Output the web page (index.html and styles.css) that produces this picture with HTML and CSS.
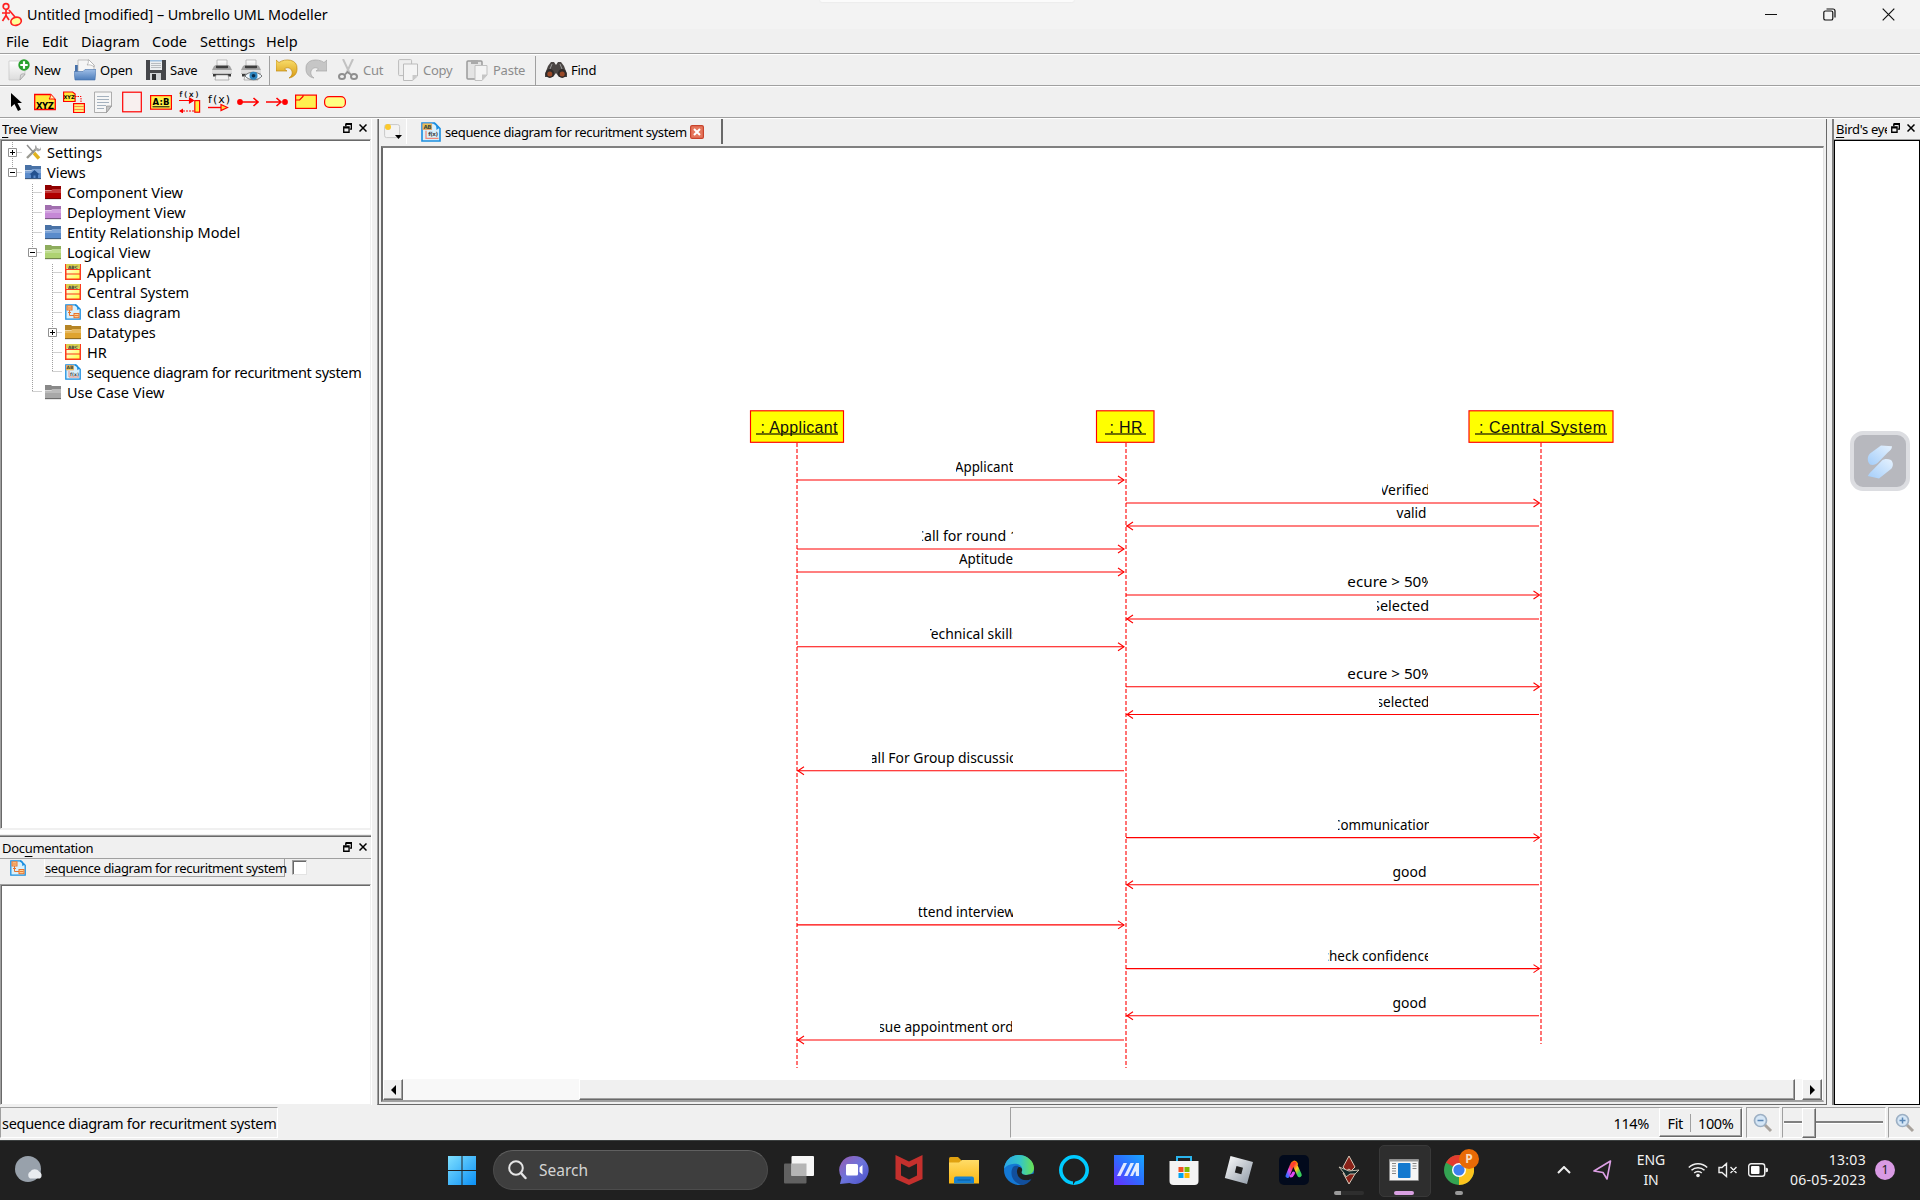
FILE: index.html
```html
<!DOCTYPE html>
<html lang="en">
<head>
<meta charset="utf-8">
<title>Untitled [modified] – Umbrello UML Modeller</title>
<link rel="stylesheet" href="styles.css">
</head>
<body>
<svg class="defs" width="0" height="0" aria-hidden="true">
  <defs>
    <linearGradient id="gWhite" x1="0" y1="0" x2="0" y2="1"><stop offset="0" stop-color="#fff"/><stop offset="1" stop-color="#dcdcdc"/></linearGradient>
    <linearGradient id="gBlue" x1="0" y1="0" x2="0" y2="1"><stop offset="0" stop-color="#9dbde6"/><stop offset="1" stop-color="#4d7dbb"/></linearGradient>
    <linearGradient id="gGold" x1="0" y1="0" x2="0" y2="1"><stop offset="0" stop-color="#f8dc6a"/><stop offset="1" stop-color="#d89a12"/></linearGradient>
    <linearGradient id="gWin" x1="0" y1="0" x2="1" y2="1"><stop offset="0" stop-color="#7fe0ff"/><stop offset="1" stop-color="#0a8ff5"/></linearGradient>
    <linearGradient id="gChat" x1="0" y1="0" x2="1" y2="1"><stop offset="0" stop-color="#9a5bb0"/><stop offset=".5" stop-color="#6c74dc"/><stop offset="1" stop-color="#4a4fc8"/></linearGradient>
    <linearGradient id="gFolder" x1="0" y1="0" x2="0" y2="1"><stop offset="0" stop-color="#ffdc68"/><stop offset="1" stop-color="#fbb711"/></linearGradient>
    <linearGradient id="gEdge" x1="0" y1="0" x2="1" y2="0"><stop offset="0" stop-color="#2aa5e8"/><stop offset=".55" stop-color="#35c6c6"/><stop offset="1" stop-color="#6be34f"/></linearGradient>
    <linearGradient id="gAsus" x1="0" y1="1" x2="1" y2="0"><stop offset="0" stop-color="#6a2cff"/><stop offset=".5" stop-color="#2d6cff"/><stop offset="1" stop-color="#17a8ff"/></linearGradient>
    <linearGradient id="gRob" x1="0" y1="0" x2="1" y2="1"><stop offset="0" stop-color="#fff"/><stop offset="1" stop-color="#8d98a5"/></linearGradient>
    <linearGradient id="gAdobe" x1="0" y1="1" x2="1" y2="0"><stop offset="0" stop-color="#3a6cff"/><stop offset=".3" stop-color="#e14cf0"/><stop offset=".6" stop-color="#ff3b30"/><stop offset="1" stop-color="#ff8a00"/></linearGradient>
    <linearGradient id="gAdobe2" x1="0" y1="0" x2=".6" y2="1"><stop offset="0" stop-color="#ff3b30"/><stop offset=".5" stop-color="#ffd21f"/><stop offset="1" stop-color="#37d05c"/></linearGradient>
    <linearGradient id="gS" x1="0" y1="1" x2="1" y2="0"><stop offset="0" stop-color="#a3cdfa"/><stop offset="1" stop-color="#e6f2fe"/></linearGradient>
    <linearGradient id="gCls" x1="0" y1="0" x2="1" y2="1"><stop offset="0" stop-color="#fff"/><stop offset="1" stop-color="#ffff3c"/></linearGradient>
    <symbol id="folder" viewBox="0 0 16 16">
      <path d="M0 2.500V1h6l1 1h9v4H0z" fill="currentColor"/><path d="M0 2.500V1h6l1 1h9v3H7L6 6H0z" fill="#000" opacity=".18"/>
      <path d="M0 6.500h6.500l1-1.500H16V15H0z" fill="currentColor"/><path d="M0 6.500h6.500l1-1.500H16v4H0z" fill="#fff" opacity=".22"/><path d="M0 14h16v1.300H0z" fill="#000" opacity=".35"/>
    </symbol>
    <symbol id="class" viewBox="0 0 16 16">
      <rect x=".75" y=".75" width="14.500" height="14.500" fill="url(#gCls)" stroke="#fb3b1e" stroke-width="1.500"/>
      <rect x="1" y="0" width="14" height="4.500" fill="#d9cf52"/><text x="8" y="4.600" text-anchor="middle" class="tiny abc">ABC</text>
      <path d="M1 5.500h14M1 10h14" stroke="#fb3b1e" stroke-width="1.200"/>
    </symbol>
    <symbol id="clsdiag" viewBox="0 0 16 16">
      <path d="M.8.8h10l4.400 4.400v10H.8z" fill="#d9f0fb" stroke="#1d8fe0" stroke-width="1.300"/>
      <rect x="2" y="1.800" width="5" height="4.200" fill="#ffd79a" stroke="#e8732c"/><rect x="9" y="9.500" width="5" height="4.200" fill="#ffd79a" stroke="#e8732c"/>
      <path d="M2.500 4h4M9.500 11.600h4M4.500 6v5.500H9M3 8l1.500 1.500L6 8" fill="none" stroke="#e8732c"/><path d="M10 1c2.500.5 3 2 3 4l1.500-1" fill="none" stroke="#1d8fe0" stroke-width="1.400"/>
    </symbol>
    <symbol id="seqdiag" viewBox="0 0 16 16">
      <path d="M.8.8h10l4.400 4.400v10H.8z" fill="#d9f0fb" stroke="#1d8fe0" stroke-width="1.300"/>
      <rect x="1.500" y="1.500" width="7" height="4.500" fill="#e8d24a" stroke="#e8a06a" stroke-width=".7"/><text x="5" y="5.300" text-anchor="middle" class="tiny">AB</text>
      <text x="9.500" y="11.500" text-anchor="middle" class="tiny">f(x)</text><path d="M4 7v6h10" fill="none" stroke="#f08a7a"/><path d="M10 1c2.500.5 3 2 3 4l1.500-1" fill="none" stroke="#1d8fe0" stroke-width="1.400"/>
    </symbol>
    <symbol id="float" viewBox="0 0 8 9"><path d="M2.500.5h5v5H6M2.500.5V3M2.500 1.200h5" fill="none" stroke="#000" stroke-width="1.300"/><path d="M.6 3.600h4.800v4.700H.6zM.6 4.300h4.800" fill="none" stroke="#000" stroke-width="1.200"/></symbol>
    <symbol id="cross" viewBox="0 0 8 8"><path d="M.5.5l7 7M7.500.5l-7 7" stroke="#000" stroke-width="1.500"/></symbol>
    <symbol id="printer" viewBox="0 0 22 22">
      <path d="M6 1h10v8H6z" fill="url(#gWhite)" stroke="#999" stroke-width=".6"/><path d="M3 7l2-1v4h12V6l2 1 2 4v4H1v-4z" fill="#a2a2a2"/><path d="M5 6.500h12v3H5z" fill="#3e3e3e"/><path d="M1 11h20v3.500H1z" fill="#dedede"/><path d="M2 15h18v2.500H2z" fill="#3a3a3a"/><path d="M5 16h12l1 5H4z" fill="#f2f2f2" stroke="#8a8a8a" stroke-width=".6"/>
    </symbol>
    <symbol id="lens" viewBox="0 0 20 20"><path d="M11 11l7 7" stroke="#a8a29c" stroke-width="3"/><circle cx="7.500" cy="7.500" r="6" fill="#d5e6f6" stroke="#9db0c4" stroke-width="1.700"/></symbol>
  </defs>
</svg>

<header class="titlebar">
  <svg class="app-icon" width="22" height="26" viewBox="0 0 22 26"><g fill="none" stroke="#f22" stroke-width="1.700"><circle cx="5" cy="4.500" r="2.800"/><path d="M5 7.500v6M1 11h8M5 13.500L1.500 19M5 13.500L8 18M8 8l6 7"/><ellipse cx="15" cy="19.300" rx="5.300" ry="4" fill="#ff9" transform="rotate(-15 15 19)"/></g></svg>
  <span class="title">Untitled [modified] – Umbrello UML Modeller</span>
  <span class="notch"></span>
  <div class="winbtns">
    <svg width="12" height="12" viewBox="0 0 12 12"><path d="M0 5.500h12" stroke="#111"/></svg>
    <svg width="13" height="13" viewBox="0 0 13 13"><rect x=".8" y="3" width="9" height="9" rx="1.600" fill="none" stroke="#111" stroke-width="1.200"/><path d="M3.500 1h6.500a2 2 0 012 2v6.500" fill="none" stroke="#111" stroke-width="1.200"/></svg>
    <svg width="13" height="13" viewBox="0 0 13 13"><path d="M.7.7l11.600 11.600M12.300.7L.7 12.300" stroke="#111" stroke-width="1.200"/></svg>
  </div>
</header>
<nav class="menubar"><span class="m1">File</span><span class="m2">Edit</span><span class="m3">Diagram</span><span class="m4">Code</span><span class="m5">Settings</span><span class="m6">Help</span></nav>

<div class="toolbar main">
  <button class="t-new"><svg width="22" height="22" viewBox="0 0 22 22"><path d="M1 2h16v14l-5 5H1z" fill="url(#gWhite)" stroke="#c4c4c4" stroke-width=".7"/><path d="M17 15c-2-.5-4 0-4.500 1l-.5 5z" fill="#d8d8d8" stroke="#999" stroke-width=".6"/><circle cx="16" cy="6" r="5.700" fill="#26a02b"/><path d="M16 2.300v7.400M12.300 6h7.400" stroke="#fff" stroke-width="2.200"/></svg>New</button>
  <button class="t-open"><svg width="22" height="22" viewBox="0 0 22 22"><path d="M1 6h5v14H1z" fill="#4571ab"/><path d="M4 1h11l5 5v9H4z" fill="#f5f5f5" stroke="#a9a9a9" stroke-width=".7"/><path d="M14 1c1 2 0 4-1 5 3-.5 5 0 7 2V6l-5-5z" fill="#fff" stroke="#999" stroke-width=".6"/><path d="M0 12.500h9l2-2h11L21 21H1z" fill="url(#gBlue)" stroke="#4571ab" stroke-width=".6"/></svg>Open</button>
  <button class="t-save"><svg width="20" height="22" viewBox="0 0 20 22"><path d="M0 1h20v20H0z" fill="#45464a"/><path d="M4 1h12v10H4z" fill="#eceef0"/><path d="M4 1h12v1.500H4z" fill="#9fc0e0"/><path d="M5 4.500h10M5 6.500h10M5 8.500h10" stroke="#b8bcc0"/><path d="M4 14h11v7H4z" fill="#cfd2d5"/><path d="M6 15h4v6H6z" fill="#2c2d30"/></svg>Save</button>
  <button class="t-print"><svg width="22" height="22"><use href="#printer"/></svg></button>
  <button class="t-preview"><svg width="22" height="22" viewBox="0 0 22 22"><use href="#printer" width="22" height="22"/><path d="M5 17c3-5 13-5 17 0-4 5-13 5-17 0z" fill="#eef6fb" stroke="#555" stroke-width=".8"/><circle cx="13.500" cy="16.800" r="4" fill="#2f86bf"/><circle cx="13.500" cy="16.800" r="1.800" fill="#0b2d4c"/></svg></button>
  <i class="sep"></i>
  <button class="t-undo"><svg width="22" height="22" viewBox="0 0 22 22"><path d="M0 1l3 2.500C9-1 22 0 21 10c0 5-3 8-8 9 3-2 4-5 2.500-8-1.500-2.500-5-3-7-1l2.500 2H0z" fill="url(#gGold)" stroke="#c08a14" stroke-width=".7"/></svg></button>
  <button class="t-redo"><svg width="22" height="22" viewBox="0 0 22 22"><path d="M22 1l-3 2.500C13-1 0 0 1 10c0 5 3 8 8 9-3-2-4-5-2.500-8 1.500-2.500 5-3 7-1l-2.500 2h11z" fill="#c6c6c6" stroke="#a6a6a6" stroke-width=".7"/></svg></button>
  <button class="t-cut off"><svg width="20" height="22" viewBox="0 0 20 22"><path d="M5 0l7 15M15 0L8 15" stroke="#c2c2c2" stroke-width="2"/><ellipse cx="4" cy="17.500" rx="3" ry="2.600" fill="none" stroke="#8f8f8f" stroke-width="2"/><ellipse cx="16" cy="17.500" rx="3" ry="2.600" fill="none" stroke="#8f8f8f" stroke-width="2"/><path d="M6.500 16l3-3 4 3" fill="none" stroke="#8f8f8f" stroke-width="1.600"/></svg>Cut</button>
  <button class="t-copy off"><svg width="20" height="22" viewBox="0 0 20 22"><rect x=".6" y=".6" width="13" height="16" rx="1" fill="#eee" stroke="#bbb"/><path d="M5.500 5h14v12l-5 4.500h-9z" fill="#f4f4f4" stroke="#bbb"/><path d="M19.500 16l-5 5.500V16z" fill="#c9c9c9"/></svg>Copy</button>
  <button class="t-paste off"><svg width="22" height="22" viewBox="0 0 22 22"><rect x="1" y="2" width="15" height="18" rx="1" fill="#e4e4e4" stroke="#9a9a9a" stroke-width="1.500"/><path d="M5 1h7v4H5z" fill="#aaa"/><path d="M9 6.500h12V16l-5 5.500H9z" fill="#f4f4f4" stroke="#c0c0c0"/><path d="M21 15.500l-5 6v-6z" fill="#c5c5c5"/></svg>Paste</button>
  <i class="sep s2"></i>
  <button class="t-find"><svg width="22" height="18" viewBox="0 0 22 18"><path d="M3 5l3-4h3l2 3 2-3h3l3 4 3 8v3h-8l-3-4-3 4H0v-3z" fill="#4a4543"/><circle cx="4.800" cy="12.500" r="4.400" fill="#302b2a"/><circle cx="17.200" cy="12.500" r="4.400" fill="#302b2a"/><circle cx="4.800" cy="13" r="2.500" fill="#9a4a28"/><circle cx="17.200" cy="13" r="2.500" fill="#9a4a28"/><path d="M7 3l-2 5M15 3l2 5" stroke="#999"/></svg>Find</button>
</div>

<div class="toolbar tools">
  <svg viewBox="0 0 22 22"><path d="M6 2v14l3.500-3 3.500 7 3-1.500-3.500-6.500H17z" fill="#000"/></svg>
  <svg viewBox="0 0 22 22"><path d="M.7 3.500h16l4.600 5v10H.7z" fill="#ffe93b" stroke="red" stroke-width="1.300"/><path d="M16 3c1 2 0 4-1 5h6" fill="#fff8b0" stroke="red"/><text x="11" y="17.500" text-anchor="middle" class="ico b8" textLength="18">XYZ</text></svg>
  <svg viewBox="0 0 22 22"><path d="M.6 1h9l2.500 2v7.500H.6z" fill="#ffe93b" stroke="red" stroke-width="1.200"/><text x="6" y="8" text-anchor="middle" class="ico b5">XYZ</text><path d="M12 5.500h6V12" fill="none" stroke="red" stroke-dasharray="1.500 1"/><rect x="10.600" y="12.600" width="10.800" height="9" fill="#ffef7a" stroke="red" stroke-width="1.200"/><path d="M11 15.500h10M11 18.500h10" stroke="#f84"/></svg>
  <svg viewBox="0 0 22 22"><path d="M2.500 1h17v14l-5 6.500h-12z" fill="#f6f6f6" stroke="#9a9a9a" stroke-width=".8"/><path d="M5 5.500h12M5 8.500h12M5 11.500h12M5 14.500h9M5 17.500h7" stroke="#8fa0b0" stroke-width=".8"/><path d="M19.500 15l-5 6.500V15z" fill="#c3c3c3" stroke="#888" stroke-width=".6"/></svg>
  <svg viewBox="0 0 22 22"><rect x="1.700" y="1.200" width="18.600" height="19.600" fill="#f8f0ef" stroke="red" stroke-width="1.200"/></svg>
  <svg viewBox="0 0 22 22"><rect x=".6" y="4.600" width="20.800" height="13.600" fill="#fff04a" stroke="red" stroke-width="1.200"/><text x="11" y="14" text-anchor="middle" class="ico b8 u" textLength="17">A:B</text><path d="M2.500 15.800h17" stroke="#000"/></svg>
  <svg viewBox="0 0 22 22"><text x="10" y="6" text-anchor="middle" class="ico f8" textLength="19">f(x)</text><path d="M0 9.500h14M10.500 7l4 2.500-4 2.500z" fill="red" stroke="red" stroke-width="1.200"/><rect x="15.800" y="9.600" width="4.800" height="11.600" fill="#ffef3c" stroke="red" stroke-width="1.200"/><path d="M1 20h14" stroke="red" stroke-width="1.200" stroke-dasharray="2 1"/><path d="M4 17.500L0 20l4 2.500z" fill="red"/></svg>
  <svg viewBox="0 0 22 22"><text x="11" y="11.500" text-anchor="middle" class="ico f10" textLength="22">f(x)</text><path d="M0 16.500h13" stroke="red" stroke-width="1.400"/><path d="M13 13.500l6.500 3-6.500 3z" fill="#ffd83c" stroke="red" stroke-width="1.200"/></svg>
  <svg viewBox="0 0 22 22"><circle cx="3" cy="11" r="2.900" fill="red"/><path d="M3 11h18M16.500 7l4.500 4-4.500 4" fill="none" stroke="red" stroke-width="1.600"/></svg>
  <svg viewBox="0 0 22 22"><circle cx="19" cy="11" r="2.900" fill="red"/><path d="M0 11h15M10.500 7l4.500 4-4.500 4" fill="none" stroke="red" stroke-width="1.600"/></svg>
  <svg viewBox="0 0 22 22"><rect x=".6" y="4.100" width="20.800" height="13.300" fill="#fff04f" stroke="red" stroke-width="1.200"/><path d="M.6 9h4L8 5.500V4" fill="none" stroke="red" stroke-width="1.200"/></svg>
  <svg viewBox="0 0 22 22"><rect x=".6" y="5.600" width="20.800" height="10.800" rx="4.500" fill="#ffff82" stroke="red" stroke-width="1.200"/></svg>
</div>

<main class="work">
  <aside class="left">
    <div class="dockhead first"><span><u>T</u>ree View</span><svg class="fl" width="9" height="10"><use href="#float"/></svg><svg width="8" height="8"><use href="#cross"/></svg></div>
    <div class="tree">
      <svg class="guides" width="70" height="270" viewBox="0 0 70 270"><g stroke="#a0a0a0" stroke-dasharray="1 1" fill="none">
        <path d="M10.500 0v29M10.500 10.500h10M10.500 30.500h10M30.500 42v207.500M30.500 50.500h10M30.500 70.500h10M30.500 90.500h10M30.500 110.500h10M30.500 249.500h10M50.500 122v108M50.500 130.500h10M50.500 150.500h10M50.500 170.500h10M50.500 190.500h10M50.500 210.500h10M50.500 229.500h10"/></g>
        <g fill="#fff" stroke="#919191"><path d="M6.500 6.500h8v8h-8zM6.500 26.500h8v8h-8zM26.500 106.500h8v8h-8zM46.500 186.500h8v8h-8z"/></g>
        <path d="M8 10.500h5M10.500 8v5M8 30.500h5M28 110.500h5M48 190.500h5M50.500 188v5" stroke="#000"/></svg>
      <div class="row l0"><svg viewBox="0 0 16 16"><path d="M2 14L12 4" stroke="#9a9a92" stroke-width="2.400"/><path d="M11 1l1 3 3 1 1-2v3l-3 1.500-3-2V2z" fill="#aaa"/><path d="M2 1l7 8" stroke="#8e8e8e" stroke-width="1.500"/><path d="M9 9l5 5.500" stroke="#e0b21d" stroke-width="3.400"/></svg><span>Settings</span></div>
      <div class="row l0"><svg viewBox="0 0 16 16" class="c-blue"><use href="#folder" width="16" height="16"/><path d="M9.500 6L4.500 10.500H6V14h2.500v-2.500h2V14H13v-3.500h1.500z" fill="#23518f"/></svg><span>Views</span></div>
      <div class="row l1"><svg class="c-red"><use href="#folder"/></svg><span>Component View</span></div>
      <div class="row l1"><svg class="c-violet"><use href="#folder"/></svg><span>Deployment View</span></div>
      <div class="row l1"><svg class="c-blue"><use href="#folder"/></svg><span>Entity Relationship Model</span></div>
      <div class="row l1"><svg class="c-green"><use href="#folder"/></svg><span>Logical View</span></div>
      <div class="row l2"><svg><use href="#class"/></svg><span>Applicant</span></div>
      <div class="row l2"><svg><use href="#class"/></svg><span>Central System</span></div>
      <div class="row l2"><svg><use href="#clsdiag"/></svg><span>class diagram</span></div>
      <div class="row l2"><svg class="c-gold"><use href="#folder"/></svg><span>Datatypes</span></div>
      <div class="row l2"><svg><use href="#class"/></svg><span>HR</span></div>
      <div class="row l2"><svg><use href="#seqdiag"/></svg><span class="seqname">sequence diagram for recuritment system</span></div>
      <div class="row l1"><svg class="c-gray"><use href="#folder"/></svg><span>Use Case View</span></div>
    </div>
    <div class="split"></div>
    <div class="dockhead doc"><span>Doc<u>u</u>mentation</span><svg class="fl" width="9" height="10"><use href="#float"/></svg><svg width="8" height="8"><use href="#cross"/></svg></div>
    <div class="docrow"><svg width="16" height="16"><use href="#clsdiag"/></svg><span class="doclabel">sequence diagram for recuritment system</span><i class="check"></i></div>
    <div class="doctext"></div>
  </aside>

  <section class="center">
    <div class="tabs">
      <svg class="newtab" width="18" height="17" viewBox="0 0 18 17"><rect x=".6" y="1.600" width="15" height="13" rx="2" fill="#f3f3f3" stroke="#c8c8c8"/><circle cx="4" cy="4" r="3" fill="#fbc92c"/><path d="M11 12h7l-3.500 4z" fill="#000"/></svg>
      <div class="tab"><svg width="20" height="20"><use href="#seqdiag"/></svg><span>sequence diagram for recuritment system</span><svg width="14" height="14" viewBox="0 0 14 14"><rect x=".6" y=".6" width="12.800" height="12.800" rx="1.500" fill="#e5765c" stroke="#c8432c" stroke-width="1.200"/><path d="M4 4l6 6M10 4l-6 6" stroke="#fff" stroke-width="2"/></svg></div>
    </div>
    <div class="canvas">
      <svg class="diagram" width="1440" height="931" viewBox="383 148 1440 931">
        <defs>
          <path id="ar" d="M-6-4L0 0l-6 4"/><path id="al" d="M6-4L0 0l6 4"/>
        </defs>
        <g class="life"><path d="M797 443V1068M1126 443V1068M1541 443V1044"/></g>
        <g class="box"><rect x="750.500" y="410.800" width="93" height="31.500"/><rect x="1096.500" y="410.800" width="57.500" height="31.500"/><rect x="1469" y="410.800" width="144" height="31.500"/></g>
        <g class="uline"><path d="M756 434h82M1105 434h41M1475 434h132"/></g>
        <g class="objname"><text x="760.500" y="433" textLength="77">: Applicant</text><text x="1109.500" y="433" textLength="33">: HR</text><text x="1479" y="433" textLength="127">: Central System</text></g>
        <g class="msg">
          <path d="M797 480h327M1126 503h413M1126 526h413M797 549h327M797 572h327M1126 595h413M1126 619h413M797 646.700h327M1126 686.800h413M1126 714.500h413M797 770.800h327M1126 837.600h413M1126 884.700h413M797 924.900h327M1126 968.600h413M1126 1015.800h413M797 1040h327"/>
          <use href="#ar" x="1124" y="480"/><use href="#ar" x="1539.500" y="503"/><use href="#al" x="1127" y="526"/><use href="#ar" x="1124" y="549"/><use href="#ar" x="1124" y="572"/><use href="#ar" x="1539.500" y="595"/><use href="#al" x="1127" y="619"/><use href="#ar" x="1124" y="646.700"/><use href="#ar" x="1539.500" y="686.800"/><use href="#al" x="1127" y="714.500"/><use href="#al" x="798" y="770.800"/><use href="#ar" x="1539.500" y="837.600"/><use href="#al" x="1127" y="884.700"/><use href="#ar" x="1124" y="924.900"/><use href="#ar" x="1539.500" y="968.600"/><use href="#al" x="1127" y="1015.800"/><use href="#al" x="798" y="1040"/>
        </g>
        <g class="lbl">
          <svg x="956" y="456" width="57" height="22"><text x="-1" y="16" textLength="58.500" lengthAdjust="spacingAndGlyphs">Applicant</text></svg>
          <svg x="1382" y="479" width="46" height="22"><text x="-2" y="16" textLength="50" lengthAdjust="spacingAndGlyphs">Verified</text></svg>
          <svg x="1390" y="502" width="38" height="22"><text x="6.500" y="16" textLength="30" lengthAdjust="spacingAndGlyphs">valid</text></svg>
          <svg x="922" y="525" width="91" height="22"><text x="-7" y="16" textLength="103" lengthAdjust="spacingAndGlyphs">Call for round 1</text></svg>
          <svg x="959" y="548" width="54" height="22"><text x="0" y="16" textLength="54" lengthAdjust="spacingAndGlyphs">Aptitude</text></svg>
          <svg x="1347" y="571" width="81" height="22"><text x="-8" y="16" textLength="95" lengthAdjust="spacingAndGlyphs">Secure &gt; 50%</text></svg>
          <svg x="1377" y="595" width="52" height="22"><text x="-5" y="16" textLength="57" lengthAdjust="spacingAndGlyphs">Selected</text></svg>
          <svg x="930" y="623" width="83" height="22"><text x="-6" y="16" textLength="95" lengthAdjust="spacingAndGlyphs">Technical skills</text></svg>
          <svg x="1347" y="663" width="81" height="22"><text x="-8" y="16" textLength="95" lengthAdjust="spacingAndGlyphs">Secure &gt; 50%</text></svg>
          <svg x="1379" y="691" width="49" height="22"><text x="-2.500" y="16" textLength="53" lengthAdjust="spacingAndGlyphs">selected</text></svg>
          <svg x="872" y="747" width="141" height="22"><text x="-11" y="16" textLength="165" lengthAdjust="spacingAndGlyphs">Call For Group discussion</text></svg>
          <svg x="1338" y="814" width="91" height="22"><text x="-6" y="16" textLength="100" lengthAdjust="spacingAndGlyphs">Communication</text></svg>
          <svg x="1390" y="861" width="38" height="22"><text x="2.500" y="16" textLength="34" lengthAdjust="spacingAndGlyphs">good</text></svg>
          <svg x="918.500" y="901" width="94.500" height="22"><text x="-9.500" y="16" textLength="106" lengthAdjust="spacingAndGlyphs">Attend interview</text></svg>
          <svg x="1328" y="945" width="100" height="22"><text x="-5.500" y="16" textLength="109" lengthAdjust="spacingAndGlyphs">check confidence</text></svg>
          <svg x="1390" y="992" width="38" height="22"><text x="2.500" y="16" textLength="34" lengthAdjust="spacingAndGlyphs">good</text></svg>
          <svg x="880" y="1016" width="132" height="22"><text x="-13" y="16" textLength="160" lengthAdjust="spacingAndGlyphs">Issue appointment order</text></svg>
        </g>
      </svg>
      <div class="hscroll">
        <span class="sbtn"><svg width="5" height="10" viewBox="0 0 5 10"><path d="M5 0v10L0 5z"/></svg></span><span class="track before"></span><span class="thumb"></span><span class="track after"></span><span class="sbtn"><svg width="5" height="10" viewBox="0 0 5 10"><path d="M0 0v10l5-5z"/></svg></span>
      </div>
    </div>
  </section>

  <aside class="right">
    <div class="dockhead"><span><u>B</u>ird's eye</span><svg class="fl" width="9" height="10"><use href="#float"/></svg><svg width="8" height="8"><use href="#cross"/></svg></div>
    <div class="bird"></div>
    <div class="widget"><svg width="26" height="36" viewBox="0 0 26 36"><path d="M14 2.500l11 .8c0 3-2 4-4 6L11 19.500c-2 2-5 3-8 2-3-3-3-8 0-11z" fill="url(#gS)"/><path d="M12 35.500L.8 33c1-2 2-3 4-5L15 17.500c2-2 6-2 9-.5 3 3 2 7 0 9z" fill="url(#gS)"/></svg></div>
  </aside>
</main>

<footer class="status">
  <span class="cell name seqname">sequence diagram for recuritment system</span>
  <div class="cell zoom"><span class="pct">114%</span><div class="fit"><span>Fit</span><i></i><span>100%</span></div></div>
  <div class="cell out"><svg width="20" height="20" viewBox="0 0 20 20"><use href="#lens" width="20" height="20"/><path d="M4.500 7.500h6" stroke="#5b87b5" stroke-width="1.500"/></svg></div>
  <div class="cell slider"><i class="groove"></i><i class="knob"></i></div>
  <div class="cell in"><svg width="20" height="20" viewBox="0 0 20 20"><use href="#lens" width="20" height="20"/><path d="M4.500 7.500h6M7.500 4.500v6" stroke="#5b87b5" stroke-width="1.500"/></svg></div>
</footer>

<div class="taskbar">
  <div class="weather"><svg width="30" height="28" viewBox="0 0 30 28"><circle cx="13" cy="13" r="13" fill="#98a1ab"/><path d="M15 22.500a4 4 0 01.5-7 5 5 0 018.500 0 4 4 0 011 7z" fill="#e9ecf0"/></svg></div>
  <div class="start"><svg width="30" height="30" viewBox="0 0 30 30"><path d="M1 1h13.500v14H1zM15.500 1H29v14H15.500zM1 16h13.500v14H1zM15.500 16H29v14H15.500z" fill="url(#gWin)"/></svg></div>
  <div class="search"><svg width="19" height="20" viewBox="0 0 19 20"><circle cx="8" cy="8" r="6.800" fill="none" stroke="#e6e6e6" stroke-width="2"/><path d="M13 13l4.500 5" stroke="#e6e6e6" stroke-width="2.400" stroke-linecap="round"/></svg><span>Search</span></div>
  <div class="apps">
    <div><svg viewBox="0 0 30 30"><rect x="0" y="8.500" width="22.500" height="20" rx="1" fill="#616161"/><rect x="7.500" y="1" width="22.500" height="20" rx="1" fill="#f6f6f6"/><path d="M7.500 8.500h15V21h-15z" fill="#b5b5b5"/></svg></div>
    <div><svg viewBox="0 0 30 30"><path d="M15 1a14 14 0 11-4.500 27L1 29l1.500-6.500A14 14 0 0115 1z" fill="url(#gChat)"/><rect x="7" y="9" width="12" height="11.500" rx="1.500" fill="#fff"/><path d="M20.500 12.500L23.500 10v9.500l-3-2.500z" fill="#fff"/></svg></div>
    <div><svg viewBox="0 0 30 30"><path d="M1.500 0L15 6.500 28.500 0v24L15 30 1.500 24zM7 8.500v12L15 24.500l8-4v-12l-8 4z" fill="#c4302d" fill-rule="evenodd"/></svg></div>
    <div><svg viewBox="0 0 30 30"><path d="M0 3.500Q0 2 1.500 2H9l4 4v4H0z" fill="#e0a110"/><path d="M0 7.500h10L13 5h17v23.500H0z" fill="url(#gFolder)"/><path d="M5 28.500v-5a2 2 0 012-2h16a2 2 0 012 2v5z" fill="#1580d2"/><path d="M8.500 25h13" stroke="#075a9c"/></svg></div>
    <div><svg viewBox="0 0 30 30"><circle cx="15" cy="15" r="15" fill="#1478d4"/><path d="M0 14C1 5 7 0 15 0s15 6 15 13c0 5-4 7-8 7-3 0-5-1-4.500-3C20 11 14 8 9 9c-5 .5-8 3-9 5z" fill="url(#gEdge)"/><path d="M9 12c-4 7 0 17 10 18 3-.5 7-3 8.500-6-8 3.500-15-1-14.500-8 0-3 2-5 2-5s-4-1-6 1z" fill="#124f9c"/><path d="M15 12c3 0 4 3 2.500 5 0 3 4 3.500 8 2.500l5-1-3 5.500c-8 3.500-15-1-14.500-8 0-2 1-4 2-4z" fill="#202020"/></svg></div>
    <div><svg viewBox="0 0 30 30"><circle cx="15" cy="15" r="13.200" fill="none" stroke="#00caff" stroke-width="3.600"/><path d="M14 25.500l3-.3-3 4.800z" fill="#202020"/></svg></div>
    <div><svg viewBox="0 0 30 30"><path d="M0 0h30v30H0z" fill="url(#gAsus)"/><path d="M3 21L9.500 8h3.500L6.500 21zM10 21l6.500-13H20l-6.500 13zM16 21l6-13h3v13h-3.200v-4.500H21L19 21z" fill="#fff" opacity=".85"/></svg></div>
    <div><svg viewBox="0 0 30 30"><path d="M8 7V2h14v5" fill="none" stroke="#2ab4ec" stroke-width="2"/><path d="M.5 6h29v20a4 4 0 01-4 4h-21a4 4 0 01-4-4z" fill="#f4f4f4"/><path d="M9.500 12h5v5h-5z" fill="#f25022"/><path d="M15.500 12h5v5h-5z" fill="#7fba00"/><path d="M9.500 18h5v5h-5z" fill="#00a4ef"/><path d="M15.500 18h5v5h-5z" fill="#ffb900"/></svg></div>
    <div><svg viewBox="0 0 30 30"><path d="M6.500 1L29 7 23 29 .8 23zM12.500 11l-1.700 6.500 6.500 1.700 1.700-6.500z" fill="url(#gRob)" fill-rule="evenodd"/></svg></div>
    <div><svg viewBox="0 0 30 30"><rect width="30" height="30" rx="5" fill="#020a1c"/><path d="M8.500 21L13 10c1-3 3-3 4-1" stroke="url(#gAdobe)" stroke-width="4" fill="none" stroke-linecap="round"/><path d="M15.500 9L20.500 20" stroke="url(#gAdobe2)" stroke-width="4.500" stroke-linecap="round"/><path d="M12 21c1.500 0 2-2 2.500-3" stroke="#e14cf0" stroke-width="3" fill="none" stroke-linecap="round"/></svg></div>
    <div class="run"><svg viewBox="0 0 30 30"><path d="M15 1l6 11-6 6-6-6z" fill="#8a2218" stroke="#d8c8b8" stroke-width="1"/><path d="M15 29L9 18l6-4 6 5z" fill="#8a2218" stroke="#d8c8b8" stroke-width="1"/><path d="M5 12l10 4 10-1-4 4-5 0-4 3-2-4z" fill="#12282a" stroke="#c8c0b0" stroke-width="1"/></svg><i></i></div>
    <div class="active"><svg viewBox="0 0 30 30"><path d="M.5 4.500h29v21H.5z" fill="#f6f6f6" stroke="#888" stroke-width=".6"/><path d="M.5 4.500h29v2H.5z" fill="#999"/><rect x="9" y="8" width="12.500" height="15" rx="1" fill="#1479cf"/><path d="M3 8.500h4M3 11h4M3 13.500h4M3 16h4M3 18.500h4M23.500 8.500h4M23.500 11h4M23.500 13.500h4" stroke="#888"/></svg><i></i></div>
    <div class="chrome"><svg viewBox="0 0 30 30"><circle cx="15" cy="15" r="15" fill="#33a352"/><path d="M15 15L2 7.500A15 15 0 0128 7.500z" fill="#e33b2e"/><path d="M15 15l13-7.500A15 15 0 0115 30z" fill="#fcc31e"/><circle cx="15" cy="15" r="7" fill="#fff"/><circle cx="15" cy="15" r="5.600" fill="#3d7ff0"/></svg><b>P</b><i></i></div>
  </div>
  <div class="tray">
    <svg class="chev" width="14" height="8" viewBox="0 0 14 8"><path d="M1 7l6-6 6 6" fill="none" stroke="#eee" stroke-width="2"/></svg>
    <svg class="loc" width="19" height="20" viewBox="0 0 19 20"><path d="M17.500 1L1 11l9 1.500L14 19z" fill="none" stroke="#dc9fe4" stroke-width="1.600" stroke-linejoin="round"/></svg>
    <div class="lang">ENG<br>IN</div>
    <svg class="wifi" width="20" height="16" viewBox="0 0 20 16"><g fill="none" stroke="#eee" stroke-width="1.500"><path d="M.8 5.500a13 13 0 0118.400 0M3.500 8.300a9.300 9.300 0 0113 0M6.200 11a5.500 5.500 0 017.600 0"/></g><circle cx="10" cy="13.500" r="1.800" fill="#eee"/></svg>
    <svg class="mute" width="20" height="16" viewBox="0 0 20 16"><path d="M1 5.500h3L8.500 1.500v13L4 10.500H1zM12.500 5l6 6M18.500 5l-6 6" fill="none" stroke="#eee" stroke-width="1.400"/></svg>
    <svg class="batt" width="20" height="14" viewBox="0 0 20 14"><rect x=".7" y=".7" width="16" height="12.600" rx="2.500" fill="none" stroke="#eee" stroke-width="1.400"/><rect x="3" y="3" width="8.500" height="8" rx="1" fill="#fff"/><path d="M17.500 4.500l2.500 1v3l-2.500 1z" fill="#eee"/></svg>
    <div class="clock">13:03<br>06-05-2023</div>
    <span class="count">1</span>
  </div>
</div>
</body>
</html>
```
FILE: styles.css
```css
* { box-sizing: border-box; }
body { margin: 0; width: 1920px; height: 1200px; overflow: hidden; display: flex; flex-direction: column; background: #f0f0f0; color: #000; font: 14.5px/20px "Noto Sans", "Open Sans", sans-serif; }
.defs { position: absolute; }
svg { flex: none; display: block; }
u { text-underline-offset: 3px; }
span { white-space: nowrap; }

.titlebar { height: 29px; flex: none; background: #f3f3f3; display: flex; align-items: center; position: relative; }
.app-icon { margin: 0 4px 0 1px; }
.title { font-size: 14.4px; letter-spacing: -.08px; }
.notch { position: absolute; left: 820px; top: 0; width: 254px; height: 2px; background: #fbfbfb; border-radius: 0 0 3px 3px; box-shadow: 0 0 2px #ddd; }
.winbtns { margin-left: auto; display: flex; align-items: center; gap: 46px; padding-right: 25px; }

.menubar { height: 26px; flex: none; display: flex; align-items: center; padding-left: 6px; border-bottom: 1px solid #fff; box-shadow: inset 0 -1px #a0a0a0; line-height: 24px; padding-bottom: 2px; }
.menubar span { flex: none; }
.m1 { width: 36px; } .m2 { width: 39px; } .m3 { width: 71px; } .m4 { width: 48px; } .m5 { width: 66px; }

.toolbar { height: 32px; flex: none; display: flex; align-items: center; border-bottom: 1px solid #fff; box-shadow: inset 0 -1px #a0a0a0; padding-bottom: 1px; }
.toolbar button { padding: 0; border: 0; background: none; color: #000; font: 13px/20px "Noto Sans", sans-serif; letter-spacing: -.25px; display: flex; align-items: center; gap: 4px; flex: none; white-space: nowrap; }
.toolbar button.off { color: #8c8c8c; gap: 5px; }
.main { padding-left: 8px; }
.t-new { width: 66px; } .t-open { width: 72px; } .t-save { width: 65px; }
.t-print, .t-undo, .t-preview { width: 29px; } .t-redo { width: 33px; }
.t-cut { width: 60px; } .t-copy { width: 68px; } .t-paste { width: 69px; }
.sep { width: 1px; height: 29px; background: #a0a0a0; margin-right: 6px; }
.s2 { margin-right: 9px; }
.tools { padding-left: 5px; gap: 7px; }
.tools svg { width: 22px; height: 22px; }
.ico { font-family: "DejaVu Sans", sans-serif; font-weight: bold; }
.b8 { font-size: 8.5px; } .b5 { font-size: 5px; } .f8 { font-size: 7.5px; font-weight: normal; stroke: #000; stroke-width: .2px; } .f10 { font-size: 11px; font-weight: normal; }
.tiny { font: bold 4.5px "DejaVu Sans", sans-serif; fill: #444; }

.work { height: 986px; flex: none; display: flex; }
.left { width: 372px; flex: none; display: flex; flex-direction: column; border-right: 1px solid #fff; }
.dockhead { height: 20px; flex: none; display: flex; align-items: center; padding: 1px 4px 0 2px; font-size: 13px; letter-spacing: -.3px; }
.dockhead span { flex: 1; overflow: hidden; }
.dockhead .fl { margin: -4px 7px 0 4px; }
.dockhead svg:last-child { margin-top: -3px; }
.first span { margin-top: -2px; }
.tree, .doctext { background: #fff; border: 1px solid #a0a0a0; border-right-color: #f0f0f0; border-bottom-color: #f0f0f0; box-shadow: inset 1px 1px #696969; }
.tree { height: 690px; padding: 2px 0 0 1px; position: relative; }
.guides { position: absolute; left: 1px; top: 2px; }
.row { height: 20px; display: flex; align-items: center; gap: 6px; }
.row svg { width: 16px; height: 16px; }
.seqname { letter-spacing: -.3px; }
.l0 { padding-left: 23px; } .l1 { padding-left: 43px; } .l2 { padding-left: 63px; }
.c-blue { color: #5a8bcb; } .c-red { color: #b00000; } .c-violet { color: #c588d6; } .c-green { color: #aed272; } .c-gold { color: #dfa32f; } .c-gray { color: #a8a8a8; }
.split { height: 6px; border-top: 1px solid #f0f0f0; border-bottom: 1px solid #f0f0f0; background: #fff; }
.doc { height: 24px; border-top: 1px solid #a0a0a0; border-bottom: 1px solid #a0a0a0; box-shadow: inset 0 1px #696969; }
.dockhead.doc svg.fl { margin-top: -2px; }
.dockhead.doc svg:last-child { margin-top: -1px; }
.docrow { height: 25px; flex: none; display: flex; align-items: flex-start; padding: 1px 0 0 10px; }
.doclabel { margin: -1px 0 0 18px; width: 241px; height: 18px; line-height: 19px; padding-left: 0; font-size: 13px; letter-spacing: -.38px; border: 1px solid #a0a0a0; border-top: 0; border-left-color: #fff; }
.check { margin-left: 7px; width: 15px; height: 15px; background: #fff; border: 1px solid #a0a0a0; border-right-color: #e3e3e3; border-bottom-color: #e3e3e3; box-shadow: inset 1px 1px #696969; }
.doctext { height: 221px; }

.center { width: 1450px; margin-left: 5px; flex: none; display: flex; flex-direction: column; border: 1px solid #a0a0a0; border-top: 0; border-right: 1px solid #696969; border-bottom-color: #696969; box-shadow: inset 1px 0 #696969; }
.tabs { height: 27px; flex: none; display: flex; padding-left: 6px; }
.newtab { margin: 4px 4px 0 0; }
.tab { width: 317px; height: 25px; display: flex; align-items: center; padding-left: 14px; border-left: 1px solid #fff; border-right: 2px solid #696969; font-size: 13px; letter-spacing: -.38px; }
.tab span { margin: 0 6px 0 4px; width: 239px; }
.canvas { margin: 0 2px 0 3px; height: 956px; background: #fff; border: 2px solid #696969; border-top-color: #808080; border-right: 1px solid #e3e3e3; border-bottom-color: #a0a0a0; display: flex; flex-direction: column; }
.diagram { height: 931px; overflow: hidden; }
.life { fill: none; stroke: red; stroke-width: 1.1; stroke-dasharray: 4 2; }
.box rect { fill: #ff0; stroke: red; stroke-width: 1.15; }
.uline { stroke: #707000; stroke-width: 1.8; }
.objname { font: 16px "Liberation Sans", Arial, sans-serif; fill: #111; }
.msg { fill: none; stroke: red; stroke-width: 1.1; }
.lbl { font: 15px "Noto Sans", sans-serif; }
.lbl svg { overflow: hidden; }
.hscroll { height: 21px; display: flex; }
.sbtn, .thumb { background: #f0f0f0; border: 1px solid #fff; border-right-color: #696969; border-bottom-color: #696969; box-shadow: inset -1px -1px #a0a0a0; }
.sbtn { width: 20px; display: flex; align-items: center; justify-content: center; }
.track { background: #f8f8f8; }
.before { width: 176px; } .thumb { width: 1216px; } .after { width: 7px; }

.right { width: 88px; margin-left: auto; flex: none; border-left: 2px solid #808080; position: relative; display: flex; flex-direction: column; }
.right .dockhead { height: 21px; padding-right: 5px; border-bottom: 1px solid #a0a0a0; }
.right .dockhead span { max-width: 51px; margin-top: -1px; }
.bird { height: 965px; background: #fff; border: 1px solid #000; }
.widget { position: absolute; left: 16px; top: 312px; width: 60px; height: 60px; border-radius: 13px; background: #b7b8be; border: 4px solid #dcdde1; display: flex; align-items: center; justify-content: center; }

.status { height: 35px; flex: none; display: flex; padding-top: 2px; }
.cell { height: 31px; flex: none; border: 1px solid #a0a0a0; border-right-color: #fff; border-bottom-color: #fff; display: flex; align-items: center; }
.name { width: 278px; padding: 0 0 0 1px; }
.zoom { margin-left: 732px; width: 733px; justify-content: flex-end; letter-spacing: -.35px; }
.pct { margin-right: 10px; }
.fit { width: 83px; height: 29px; display: flex; align-items: center; justify-content: center; gap: 7px; border: 1px solid #fff; border-right-color: #696969; border-bottom-color: #696969; box-shadow: inset -1px -1px #a0a0a0; }
.fit i { width: 1px; height: 18px; background: #a0a0a0; }
.out { width: 34px; margin: 0 2px 0 3px; justify-content: center; }
.slider { width: 104px; position: relative; }
.in { width: 33px; margin-left: 2px; padding-left: 6px; border-right: 0; }
.groove { width: 99px; height: 3px; margin-left: 1px; background: #fff; border-top: 2px solid #808080; }
.knob { position: absolute; left: 19px; top: 0; width: 14px; height: 30px; background: #f0f0f0; border: 1px solid #fff; border-right-color: #696969; border-bottom-color: #696969; box-shadow: inset -1px -1px #a0a0a0; }

.taskbar { height: 60px; flex: none; display: flex; align-items: center; background: #202020; border-top: 1px solid #3c4040; color: #f2f2f2; padding-bottom: 1px; }
.weather { width: 447px; padding-left: 15px; }
.start { width: 46px; }
.search { width: 275px; height: 40px; border-radius: 20px; background: #3e3e3e; border: 1px solid #4c4c4c; border-top-color: #606060; display: flex; align-items: center; padding-left: 14px; gap: 12px; font-size: 15.5px; color: #d4d4d4; margin-right: 3px; }
.apps { display: flex; height: 58px; }
.apps div { width: 55px; height: 58px; display: flex; align-items: center; justify-content: center; position: relative; }
.apps svg { width: 30px; height: 30px; }
.apps i { position: absolute; bottom: 4px; left: 50%; height: 4px; border-radius: 2px; }
.run i { width: 30px; margin-left: -15px; background: linear-gradient(90deg, #9a9a9a 7px, #2e2e2e 7px); }
.active::before { content: ""; position: absolute; left: 3px; top: 4px; width: 50px; height: 50px; border-radius: 5px; background: #2e2e2e; border: 1px solid #393939; }
.active svg { position: relative; }
.active i { width: 20px; margin-left: -10px; background: #d9a0e2; }
.chrome i { width: 8px; margin-left: -4px; background: #9a9a9a; }
.chrome b { position: absolute; left: 28px; top: 8px; width: 20px; height: 20px; border-radius: 50%; background: #e86a06; color: #f9dcc0; font-size: 12px; line-height: 20px; text-align: center; }
.tray { margin-left: auto; display: flex; align-items: center; line-height: 20px; font-size: 14px; padding-right: 25px; }
.loc { margin-left: 22px; }
.lang { width: 40px; margin-left: 19px; text-align: center; letter-spacing: -.1px; }
.wifi { margin-left: 17px; } .mute { margin-left: 10px; } .batt { margin-left: 10px; }
.clock { width: 98px; text-align: right; letter-spacing: .3px; }
.count { width: 20px; height: 20px; margin-left: 9px; border-radius: 50%; background: #d99ae4; color: #222; text-align: center; font-size: 12.5px; }
```
